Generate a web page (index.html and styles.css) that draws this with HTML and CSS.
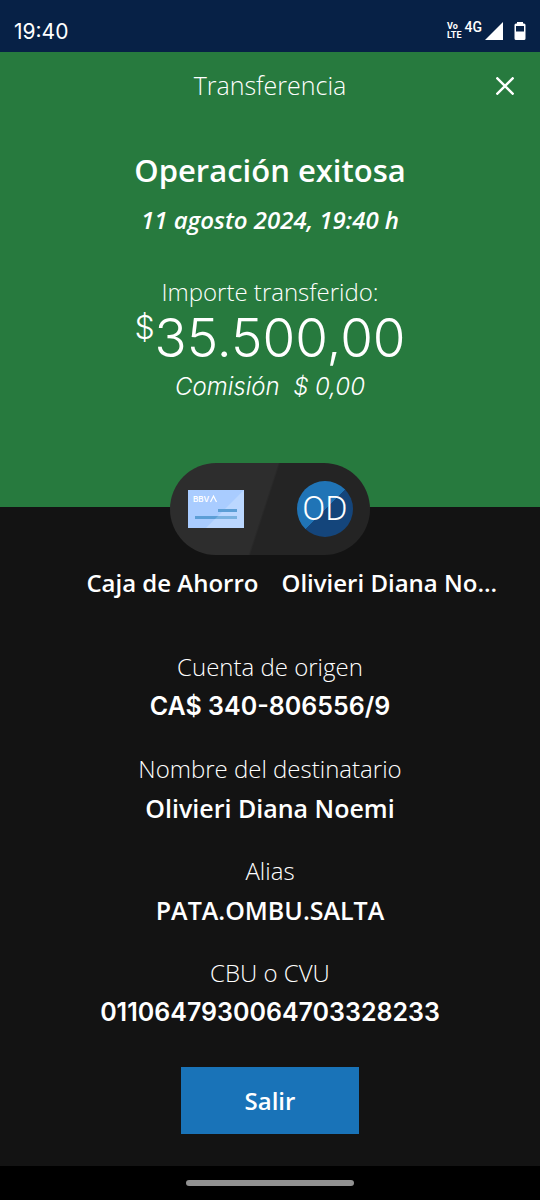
FILE: index.html
```html
<!DOCTYPE html>
<html lang="es">
<head>
<meta charset="utf-8">
<meta name="viewport" content="width=device-width, initial-scale=1">
<title>Transferencia</title>
<link rel="stylesheet" href="styles.css">
</head>
<body>
<div class="screen">
  <div class="status">
    <time class="clock">19:40</time>
    <div class="signals">
      <span class="volte"><span>Vo</span><span>LTE</span></span>
      <span class="network">4G</span>
      <svg class="signal" viewBox="0 0 18 18" aria-hidden="true"><path d="M18 0V18H0Z" fill="#fff"/></svg>
      <svg class="battery" viewBox="0 0 12 18" aria-hidden="true"><path fill="#fff" fill-rule="evenodd" d="M3 0H9V1.500H10Q11.500 1.500 11.500 3V16.500Q11.500 18 10 18H2Q.5 18 .5 16.500V3Q.5 1.500 2 1.500H3ZM2 4V9.500H10V4Z"/></svg>
    </div>
  </div>
  <header class="hero">
    <div class="bar">
      <p class="bar-title">Transferencia</p>
      <button class="close" type="button" aria-label="Cerrar">
        <svg viewBox="0 0 18 18" aria-hidden="true"><path d="M.5 .5L17.500 17.500M17.500 .5L.5 17.500" stroke="#fff" stroke-width="2.400" fill="none"/></svg>
      </button>
    </div>
    <h1 class="result">Operación exitosa</h1>
    <time class="date">11 agosto 2024, 19:40 h</time>
    <p class="caption">Importe transferido:</p>
    <p class="amount"><span class="currency">$</span>35.500,00</p>
    <p class="fee">Comisión&nbsp; $ 0,00</p>
  </header>
  <main class="details">
    <div class="parties">
      <svg class="card" viewBox="0 0 56 38" aria-hidden="true">
        <path d="M0 0H56V38H0Z" fill="#a9ccff"/>
        <path d="M56 0V38H18Z" fill="#bbd7ff"/>
        <path d="M30 19H49V22H30Z" fill="#5c9ed6"/>
        <path d="M7 26H49V29H7Z" fill="#5c9ed6"/>
        <path d="M30 26H49V29H27Z" fill="#79b1e0"/>
        <text class="card-brand" x="5" y="12">BBV</text>
        <path d="M22.500 12L25.500 6L28.500 12" fill="none" stroke="#fff" stroke-width="1.200"/>
      </svg>
      <span class="avatar">OD</span>
    </div>
    <div class="names">
      <span class="from">Caja de Ahorro</span>
      <span class="to">Olivieri Diana No...</span>
    </div>
    <dl class="fields">
      <div class="field"><dt>Cuenta de origen</dt><dd class="number">CA$ 340-806556/9</dd></div>
      <div class="field"><dt>Nombre del destinatario</dt><dd>Olivieri Diana Noemi</dd></div>
      <div class="field"><dt>Alias</dt><dd>PATA.OMBU.SALTA</dd></div>
      <div class="field"><dt>CBU o CVU</dt><dd class="number">0110647930064703328233</dd></div>
    </dl>
    <button class="exit" type="button">Salir</button>
  </main>
  <div class="gesture"><span class="handle"></span></div>
</div>
</body>
</html>
```
FILE: styles.css
```css
* { box-sizing: border-box; }
body, h1, p, dl, dd { margin: 0; }
body {
  background: #131313;
  color: #fff;
  font-family: "Open Sans", "Noto Sans", sans-serif;
  font-size: 24px;
  font-weight: 300;
  line-height: 32px;
}
button { border: 0; padding: 0; font: inherit; color: inherit; cursor: pointer; }
svg { display: block; }

.screen { display: flex; flex-direction: column; min-height: 100vh; }

.status {
  display: flex;
  align-items: flex-end;
  justify-content: space-between;
  height: 52px;
  padding: 0 14px 4px;
  background: #072146;
}
.clock { font-family: Inter, sans-serif; font-size: 21px; font-weight: 400; }
.signals { display: flex; align-items: center; gap: 3px; padding-bottom: 8px; }
.volte {
  display: flex;
  flex-direction: column;
  font-family: Roboto, sans-serif;
  font-size: 9px;
  font-weight: 700;
  line-height: 9px;
}
.network { font-family: Roboto, sans-serif; font-size: 14px; font-weight: 500; line-height: 18px; align-self: flex-start; margin-top: -4px; }
.signal { width: 18px; height: 18px; }
.battery { width: 12px; height: 18px; margin-left: 8px; }

.hero {
  display: flex;
  flex-direction: column;
  align-items: center;
  padding-bottom: 105px;
  background: #277a3e;
  text-align: center;
}
.bar {
  display: grid;
  grid-template-columns: 1fr auto 1fr;
  align-items: center;
  align-self: stretch;
  height: 66px;
  padding: 0 14px;
}
.bar-title { grid-column: 2; font-size: 25px; }
.close { justify-self: end; padding: 12px 8px 10px; background: none; margin-right: 4px; }
.close svg { width: 18px; height: 18px; }
.result { margin-top: 32px; font-size: 31px; font-weight: 600; line-height: 40px; }
.date { margin-top: 14px; font-weight: 600; font-style: italic; }
.caption { margin-top: 40px; }
.amount { display: flex; margin-top: 2px; font-family: Inter, sans-serif; font-size: 53px; line-height: 56px; }
.currency { font-size: 32px; line-height: 36px; }
.fee { margin-top: 5px; font-family: Inter, sans-serif; font-style: italic; }

.hero { padding-bottom: 104px; }

.details {
  display: flex;
  flex: 1;
  flex-direction: column;
  align-items: center;
  padding-bottom: 32px;
  text-align: center;
}
.parties {
  display: flex;
  align-items: center;
  justify-content: space-between;
  width: 200px;
  height: 92px;
  margin-top: -44px;
  padding: 0 17px 0 18px;
  border-radius: 46px;
  background: linear-gradient(108deg, #2d2d2d 47%, #242424 48%);
}
.card { width: 56px; height: 38px; }
.card-brand { font-family: Inter, sans-serif; font-size: 8px; font-weight: 600; fill: #fff; }
.avatar {
  width: 56px;
  height: 56px;
  border-radius: 50%;
  background: linear-gradient(135deg, #2074b6 50%, #14457b 50%);
  font-family: Roboto, sans-serif;
  font-size: 34px;
  line-height: 54px;
}
.names {
  display: grid;
  grid-template-columns: 1fr 1fr;
  gap: 23px;
  align-self: stretch;
  margin-top: 12px;
  font-weight: 600;
  white-space: nowrap;
}
.from { text-align: right; }
.to { text-align: left; }

.fields { display: flex; flex-direction: column; gap: 31px; margin-top: 52px; }
.field { display: flex; flex-direction: column; gap: 7px; }
.field dd { font-size: 25px; font-weight: 600; }
.field .number { font-family: Inter, sans-serif; }

.exit {
  width: 178px;
  height: 67px;
  margin-top: 39px;
  background: #1973b8;
  font-weight: 600;
}
.gesture { display: flex; justify-content: center; padding: 14px 0; background: #000; }
.handle { width: 168px; height: 6px; border-radius: 3px; background: #919191; }
```
